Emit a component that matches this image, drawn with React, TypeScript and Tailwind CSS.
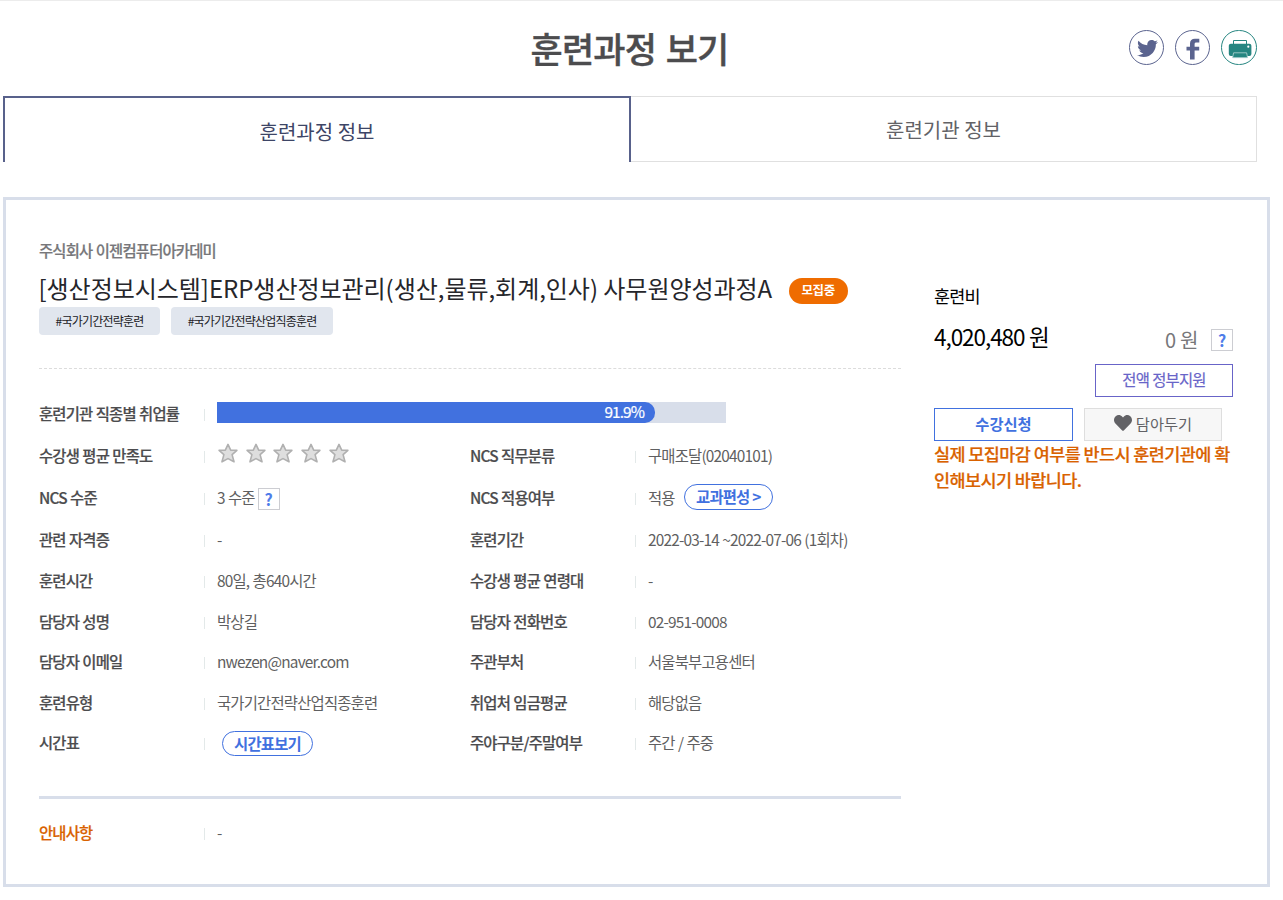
import type { ReactNode } from "react";
import { FaHeart, FaTwitter } from "react-icons/fa";

function Pill({ children, className }: { children: ReactNode; className: string }) {
  return (
    <button className={`flex items-center justify-center rounded-[13px] border border-[#4171df] bg-white pb-[2px] font-bold text-[#4171df] ${className}`}>
      {children}
    </button>
  );
}

function Help({ className = "" }: { className?: string }) {
  return (
    <span className={`flex h-[22px] w-[22px] shrink-0 items-center justify-center border border-[#cccdd2] bg-white text-[16px] leading-[20px] font-bold tracking-normal text-[#4f7de9] ${className}`}>
      ?
    </span>
  );
}

function Stars() {
  return (
    <div className="-mt-[3px] flex gap-[7.7px]">
      {[0, 1, 2, 3, 4].map((n) => (
        <svg key={n} width="20" height="20" viewBox="0 0 20 20" className="first:ml-[1px]">
          <path d="M10 1.400l2.700 5.700 6.200.2-4.800 4.300 1.900 7.200L10 15.600l-6 3.200 1.900-7.200L1.100 7.300l6.200-.2z" fill="#dedede" stroke="#b0b0b0" strokeWidth="1.600" strokeLinejoin="round" />
        </svg>
      ))}
    </div>
  );
}

function Cell({ label, children, wide = false, orange = false }: { label: string; children: ReactNode; wide?: boolean; orange?: boolean }) {
  return (
    <div className={wide ? "flex items-center" : "flex w-[431px] items-center"}>
      <span className={orange ? "w-[165px] pb-[2px] font-medium text-[#d96200] [-webkit-text-stroke:0.2px]" : "w-[165px] pb-[2px] font-medium text-[#4c4c4e] [-webkit-text-stroke:0.2px]"}>{label}</span>
      <span className="mt-[2px] mr-[12px] h-[12px] w-px bg-[#e3e9e9]" />
      <div className="flex items-center pb-[2px] text-[#5f5f61]">{children}</div>
    </div>
  );
}

function Row({ children, className }: { children: ReactNode; className: string }) {
  return <div className={`flex ${className}`}>{children}</div>;
}

function Header() {
  return (
    <header className="flex h-[96px] border-t border-[#ececec]">
      <div className="w-[130px]" />
      <h1 className="flex-1 pt-[21px] text-center text-[35px] leading-[52px] font-medium tracking-[-0.8px] text-[#4c4c4e] [word-spacing:2.500px] [-webkit-text-stroke:0.4px]">훈련과정 보기</h1>
      <div className="mr-[26px] flex gap-[11px] pt-[29px]">
        <span className="flex h-[35px] w-[35px] items-center justify-center rounded-full border border-[#5b648f] text-[#5b648f]">
          <FaTwitter size={21} className="mt-[2px] ml-[2px]" />
        </span>
        <span className="flex h-[35px] w-[35px] items-center justify-center rounded-full border border-[#5b648f] text-[#5b648f]">
          <svg width="14" height="22" viewBox="0 0 14 22" className="mt-[2px] ml-[1px]">
            <path d="M4 21.500V12.500H.5V8.700H4V5.500C4 2.200 5.900.7 8.800.7h4.500v3.800h-2.700C9 4.500 8.600 5 8.600 6.300v2.400h4.600v3.800H8.600v9z" fill="currentColor" />
          </svg>
        </span>
        <span className="flex h-[35px] w-[36px] items-center justify-center rounded-full border border-[#268681] text-[#268681]">
          <svg width="24" height="20" viewBox="0 0 24 20" className="mt-[2px] ml-[2px]">
            <path d="M5.500 5.500V1.500h13v4" fill="none" stroke="currentColor" strokeWidth="1" />
            <rect x="0.800" y="4.700" width="22.600" height="12.300" rx="2" fill="currentColor" />
            <path d="M5.600 13.800h13l1 4.900h-15z" fill="currentColor" stroke="#b5d6d4" strokeWidth="0.800" />
            <circle cx="20.300" cy="7.700" r="1.100" fill="white" />
          </svg>
        </span>
      </div>
    </header>
  );
}

function Summary() {
  return (
    <section className="w-[862px]">
      <p className="text-[15.4px] leading-[24px] font-medium text-[#77777a] [-webkit-text-stroke:0.2px]">주식회사 이젠컴퓨터아카데미</p>
      <div className="mt-[8px] flex h-[37px] items-center">
        <h2 className="-ml-[0.500px] pb-[2px] text-[24px] leading-[37px] tracking-[-0.04px] text-[#26262b] [word-spacing:0px]">[생산정보시스템]ERP생산정보관리(생산,물류,회계,인사) 사무원양성과정A</h2>
        <span className="mt-[4px] ml-[16.500px] flex h-[26px] w-[59px] items-center justify-center rounded-full bg-[#ef6c00] pb-[1px] text-[12.500px] font-bold tracking-[-0.4px] text-white">모집중</span>
      </div>
      <div className="flex gap-[11px] text-[12px] tracking-[-0.8px] text-[#222226]">
        <span className="flex h-[28px] w-[121px] items-center justify-center rounded-[4px] bg-[#e1e6ee]">#국가기간전략훈련</span>
        <span className="flex h-[28px] w-[162px] items-center justify-center rounded-[4px] bg-[#e1e6ee]">#국가기간전략산업직종훈련</span>
      </div>
      <div className="mt-[33px] border-t border-dashed border-[#dcdcdc]" />
      <div className="pt-[24px]">
        <Row className="h-[42px]">
          <Cell label="훈련기관 직종별 취업률" wide>
            <div className="-mt-[2px] h-[21px] w-[509px] bg-[#d8deea]">
              <div className="flex h-full w-[438px] items-center justify-end rounded-r-[10px] bg-[#4171df] pr-[11px] pb-[2px] tracking-[-0.9px] text-white [-webkit-text-stroke:0.2px]">91.9%</div>
            </div>
          </Cell>
        </Row>
        <Row className="h-[41px]">
          <Cell label="수강생 평균 만족도"><Stars /></Cell>
          <Cell label="NCS 직무분류">구매조달(02040101)</Cell>
        </Row>
        <Row className="h-[43px]">
          <Cell label="NCS 수준">3 수준<Help className="mt-[4px] ml-[3px]" /></Cell>
          <Cell label="NCS 적용여부">적용<Pill className="mt-[1px] ml-[9px] h-[26px] w-[89px]">교과편성 &gt;</Pill></Cell>
        </Row>
        <Row className="h-[42px]">
          <Cell label="관련 자격증">-</Cell>
          <Cell label="훈련기간">2022-03-14 ~2022-07-06 (1회차)</Cell>
        </Row>
        <Row className="h-[40px]">
          <Cell label="훈련시간">80일, 총640시간</Cell>
          <Cell label="수강생 평균 연령대">-</Cell>
        </Row>
        <Row className="h-[41px]">
          <Cell label="담당자 성명">박상길</Cell>
          <Cell label="담당자 전화번호">02-951-0008</Cell>
        </Row>
        <Row className="h-[40px]">
          <Cell label="담당자 이메일">nwezen@naver.com</Cell>
          <Cell label="주관부처">서울북부고용센터</Cell>
        </Row>
        <Row className="h-[41px]">
          <Cell label="훈련유형">국가기간전략산업직종훈련</Cell>
          <Cell label="취업처 임금평균">해당없음</Cell>
        </Row>
        <Row className="h-[40px]">
          <Cell label="시간표"><Pill className="mt-[3px] ml-[5px] h-[25px] w-[91px]">시간표보기</Pill></Cell>
          <Cell label="주야구분/주말여부">주간 / 주중</Cell>
        </Row>
      </div>
      <div className="mt-[33px] h-[3px] bg-[#d8deea]" />
      <Row className="mt-[14px] h-[40px]">
        <Cell label="안내사항" wide orange>-</Cell>
      </Row>
    </section>
  );
}

function Fee() {
  return (
    <aside className="ml-[33px] w-[299px] pt-[45px]">
      <p className="text-[17.500px] leading-[26px] text-black">훈련비</p>
      <div className="mt-[10px] flex h-[34px] justify-between">
        <span className="text-[22.500px] leading-[34px] tracking-[-1.05px] text-black">4,020,480 원</span>
        <span className="flex items-center pt-[7px] text-[20px] tracking-[-0.5px] text-[#77777a]">0 원<Help className="ml-[13px]" /></span>
      </div>
      <div className="mt-[11px] flex justify-end">
        <span className="flex h-[33px] w-[138px] items-center justify-center border border-[#6864c8] pb-[3px] text-[#6864c8] [-webkit-text-stroke:0.2px]">전액 정부지원</span>
      </div>
      <div className="mt-[11px] flex gap-[11px] text-[15.300px] tracking-normal">
        <button className="flex h-[33px] w-[139px] items-center justify-center border border-[#4171df] pb-[3px] font-bold text-[#4171df]">수강신청</button>
        <button className="flex h-[33px] w-[138px] items-center justify-center border border-[#dedede] bg-[#f7f7f7] pb-[3px] text-[#626266]">
          <FaHeart size={18} className="mr-[4px]" />담아두기
        </button>
      </div>
      <p className="w-[300px] text-[17.500px] leading-[26px] font-medium tracking-[-0.6px] text-[#d96200] [word-spacing:0px] [-webkit-text-stroke:0.2px]">실제 모집마감 여부를 반드시 훈련기관에 확<br />인해보시기 바랍니다.</p>
    </aside>
  );
}

export default function App() {
  return (
    <main className="h-[900px] w-[1283px] overflow-hidden bg-white font-['Noto_Sans_CJK_KR',sans-serif] text-[15.4px] leading-[24px] tracking-[-0.8px] [word-spacing:0.6px]">
      <Header />
      <nav className="ml-[3px] flex h-[66px] w-[1254px] text-[20px] tracking-normal [word-spacing:0px]">
        <div className="flex w-[628px] items-center justify-center border-x-2 border-t-2 border-[#58618b] pt-[3px] text-[#3d4566]">훈련과정 정보</div>
        <div className="flex flex-1 items-center justify-center border-y border-r border-[#e0e0e0] pt-[2px] text-[#626266]">훈련기관 정보</div>
      </nav>
      <div className="mt-[35px] ml-[3px] flex h-[690px] w-[1267px] border-[3px] border-[#d8deea] pt-[38px] pl-[33px]">
        <Summary />
        <Fee />
      </div>
    </main>
  );
}
